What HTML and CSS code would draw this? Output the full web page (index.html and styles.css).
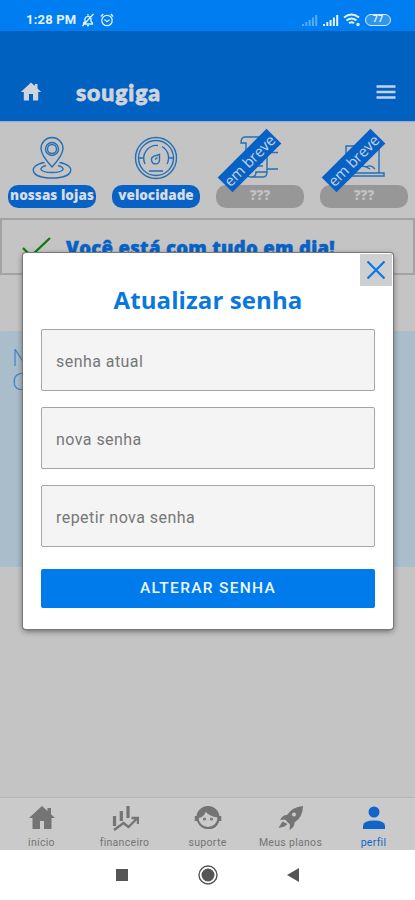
FILE: index.html
```html
<!DOCTYPE html>
<html lang="pt-BR">
<head>
<meta charset="utf-8">
<title>sougiga</title>
<link rel="stylesheet" href="styles.css">
</head>
<body>
<div class="status">
  <span class="time">1:28 PM</span>
  <svg class="bell" width="14" height="14" viewBox="0 0 14 14" fill="none" stroke="currentColor" stroke-width="1.3"><path d="M2.5 11V10L4 8.5V5.5a3.2 3.2 0 0 1 6 0V8.5L11.5 10V11zM6 12.6h2M7 1v1.5M12.5 1L1.5 13"/></svg>
  <svg class="alarm" width="14" height="14" viewBox="0 0 14 14" fill="none" stroke="currentColor" stroke-width="1.3"><circle cx="7" cy="7.5" r="5.2"/><path d="M4.5 6.5L7 8.7l2.5-2M.8 3.5L3.2 1M13.2 3.5L10.8 1"/></svg>
  <span class="spacer"></span>
  <svg class="signal dim" width="17" height="12" viewBox="0 0 17 12" fill="currentColor"><path d="M1 10h2v2H1zM4.300 8h2v4h-2zM7.600 6h2v6h-2zM10.900 3.500h2V12h-2zM14.200 1h2v11h-2z"/></svg>
  <svg class="signal" width="17" height="12" viewBox="0 0 17 12" fill="currentColor"><path d="M1 10h2v2H1zM4.300 8h2v4h-2zM7.600 6h2v6h-2zM10.900 3.500h2V12h-2zM14.200 1h2v11h-2z"/></svg>
  <svg class="wifi" width="18" height="14" viewBox="0 0 18 14" fill="none" stroke="currentColor" stroke-width="2"><path d="M1 4.500q7.500-6 15 0M3.500 7.500q5-4 10 0M6 10.300q2.500-2 5 0"/><circle cx="15" cy="11.500" r="1" stroke-width="1.500"/></svg>
  <span class="battery">77</span>
</div>
<header class="header">
  <svg width="22" height="20" viewBox="0 0 22 20" fill="currentColor"><path d="M11 .5L.8 10h3v8.500H9V12h4v6.500h5.200V10h3L17.500 6.500V2h-2.700v2z"/></svg>
  <h1 class="brand">sougiga</h1>
  <svg class="menu" width="20" height="16" viewBox="0 0 20 16" stroke="currentColor" stroke-width="2.300"><path d="M.5 2.500h19M.5 8h19M.5 13.500h19"/></svg>
</header>
<main class="content">
  <nav class="shortcuts">
    <div class="tile">
      <svg width="44" height="44" viewBox="0 0 44 44" class="line"><path d="M22 31Q11 19 11 12.500a11 11 0 0 1 22 0Q33 19 22 31z"/><circle cx="22" cy="13" r="6.500"/><circle cx="22" cy="13" r="4.500"/><path d="M14.500 26.500C-2 29-1 42 22 42s24-13 7.500-15.500M16 29.500c-8 2-7 7 6 7s14-5 6-7"/></svg>
      <span class="pill">nossas lojas</span>
    </div>
    <div class="tile">
      <svg width="44" height="44" viewBox="0 0 44 44" class="line"><circle cx="22" cy="22" r="20.500"/><circle cx="22" cy="22" r="17.500"/><path d="M11 28a13 13 0 0 1 13-18.500M28 10.500A13 13 0 0 1 33 28M4.500 22H9M35 22h4.500M15 35h14M25.500 18.500L20 20.200a4 4 0 1 0 5.500 4zM21 23.500l2.500-2"/></svg>
      <span class="pill">velocidade</span>
    </div>
    <div class="tile">
      <svg width="44" height="44" viewBox="0 0 44 44" class="line"><path d="M28 1H7Q3 1 3 7h5v29q0 5 5 5h12q4 0 4-5V8M13 41q5 0 5-5h11M28 16.500h12M29 33h11M12 22h13M12 26h13M12 30h13"/></svg>
      <span class="pill off">???</span><span class="ribbon">em breve</span>
    </div>
    <div class="tile">
      <svg width="44" height="44" viewBox="0 0 44 44" class="line"><path d="M4 37V10h8M32 10h5v27M1 37h41v3H1zM10 33q10-6 18 0M24 31q5-3 9 2"/></svg>
      <span class="pill off">???</span><span class="ribbon">em breve</span>
    </div>
  </nav>
  <section class="notice">
    <svg width="30" height="24" viewBox="0 0 30 24" fill="none" stroke="#087d0b" stroke-width="2.300"><path d="M1 12l8 8L28 2"/></svg>
    <span class="notice-text">Você está com tudo em dia!</span>
  </section>
  <section class="panel">N<br>C</section>
</main>
<nav class="tabs">
  <div class="tab">
    <svg width="28" height="26" viewBox="0 0 28 26" fill="currentColor"><path d="M14 1L1 13h3.500v11h7.500v-8h4v8h7.500V13H27l-4-3.700V3h-3.500v3z"/></svg><span>início</span>
  </div>
  <div class="tab">
    <svg width="28" height="26" viewBox="0 0 28 26" fill="none" stroke="currentColor" stroke-width="3.200"><path d="M3.500 11v10M10.300 6v10M17 1v12"/><path stroke-width="2.300" d="M3 25l9.500-7 5 4L26 13.500M20.500 13H27v6"/></svg><span>financeiro</span>
  </div>
  <div class="tab">
    <svg width="28" height="26" viewBox="0 0 28 26" fill="none" stroke="currentColor" stroke-width="2"><circle cx="14" cy="12.500" r="10.500"/><path fill="currentColor" d="M4 12C9 12 10.500 8 11.500 5q4 6 12.500 6.500C22-1 5 0 4 12z"/><path stroke-width="3.500" d="M2.500 11v5M25.500 11v5"/><path d="M24.500 15q-2 8-9 8"/><circle cx="10.500" cy="14" r=".6"/><circle cx="17.500" cy="14" r=".6"/></svg><span>suporte</span>
  </div>
  <div class="tab">
    <svg width="28" height="26" viewBox="0 0 28 26" fill="currentColor"><path fill-rule="evenodd" d="M26 1q-11 1-16 9-4-.5-7 5l5-.5 5 5-.5 5.500q5-3 5-7.500Q26 12 26 1zM17 7.500a2 2 0 1 1 0 4 2 2 0 0 1 0-4z"/><path d="M5.500 16.500L1.500 23l6-1.500 3-2.500z"/></svg><span>Meus planos</span>
  </div>
  <div class="tab active">
    <svg width="28" height="26" viewBox="0 0 28 26" fill="currentColor"><circle cx="14" cy="7" r="5.500"/><path d="M3 24v-3q0-5.500 11-5.500T25 21v3z"/></svg><span>perfil</span>
  </div>
</nav>
<footer class="system">
  <svg width="14" height="14" viewBox="0 0 14 14"><path d="M1 1h12v12H1z" fill="#555"/></svg>
  <svg width="20" height="20" viewBox="0 0 20 20" fill="none" stroke="#555" stroke-width="1.400"><circle cx="10" cy="10" r="9"/><circle cx="10" cy="10" r="5.800" fill="#555"/></svg>
  <svg width="14" height="14" viewBox="0 0 14 14"><path d="M13 0v14L1 7z" fill="#555"/></svg>
</footer>
<form class="modal">
  <button type="button" class="close" aria-label="Fechar"><svg width="20" height="20" viewBox="0 0 20 20" stroke="#0878e8" stroke-width="2.200"><path d="M1.500 1.500l17 17M18.500 1.500l-17 17"/></svg></button>
  <h2 class="title">Atualizar senha</h2>
  <div class="field">senha atual</div>
  <div class="field">nova senha</div>
  <div class="field">repetir nova senha</div>
  <button type="button" class="submit">ALTERAR SENHA</button>
</form>
</body>
</html>
```
FILE: styles.css
```css
* { box-sizing: border-box; }
body { margin: 0; width: 415px; height: 900px; overflow: hidden; display: flex; flex-direction: column; position: relative; font-family: Roboto, sans-serif; background: #c4c4c4; }
svg { display: block; flex: none; }
.status { height: 31px; flex: none; background: #007df0; color: #e2f2ff; display: flex; align-items: center; padding: 8px 24px 0 26px; }
.time { font-size: 13px; font-weight: 700; width: 50px; white-space: nowrap; letter-spacing: .2px; }
.bell { margin-left: 5px; }
.alarm { margin-left: 5px; }
.spacer { flex: 1; }
.signal { margin-right: 4px; }
.dim { opacity: .4; }
.wifi { margin-right: 4px; }
.battery { width: 26px; height: 12px; border: 1.5px solid #d6ecff; border-radius: 6px; font-size: 9px; line-height: 9px; font-weight: 700; text-align: center; background: #2f95f3; }
.header { height: 90px; flex: none; background: #0061c1; color: #d0d4dc; display: flex; align-items: center; padding: 32px 19px 0 20px; box-shadow: 0 1px 1px #9aacc9; z-index: 1; }
.brand { margin: 0 0 0 34px; font: 900 23px/28px Lato, sans-serif; -webkit-text-stroke: .8px currentColor; width: 88px; letter-spacing: .9px; }
.menu { margin-left: auto; color: #c2d2e8; }
.content { flex: 1; min-height: 0; }
.shortcuts { height: 97px; display: grid; grid-template-columns: repeat(4, 88px); column-gap: 16px; padding: 15px 0 0 8px; }
.tile { position: relative; display: flex; flex-direction: column; align-items: center; }
.line { fill: none; stroke: #246fb5; stroke-width: 1.4; }
.pill { margin-top: 5px; width: 88px; height: 23px; border-radius: 10px; background: #0862c5; color: #d5dce6; font: 800 13.5px/21px "Open Sans", sans-serif; text-align: center; white-space: nowrap; }
.tile:first-child .pill { letter-spacing: .05px; }
.off { background: #979797; color: #c3c3c3; }
.ribbon { position: absolute; left: -1px; top: 14px; width: 69px; height: 21px; background: #0862c5; color: #c3d3e7; font: 500 15px/20px "Open Sans", sans-serif; letter-spacing: -.1px; text-align: center; white-space: nowrap; transform: rotate(-45deg); }
.notice { height: 57px; border: 2px solid #a3a3a3; display: flex; align-items: center; padding: 3px 0 0 20px; }
.notice-text { margin-left: 14px; width: 270px; color: #0862c5; font: 800 18.5px/26px "Open Sans", sans-serif; -webkit-text-stroke: .5px currentColor; white-space: nowrap; letter-spacing: .32px; }
.panel { margin-top: 56px; height: 236px; background: #aabdca; color: #3b82c7; padding: 14px 12px; font: 300 23px/24px "Open Sans", sans-serif; }
.tabs { height: 53px; flex: none; border-top: 1px solid #b4b4b4; background: #cacaca; color: #707070; display: grid; grid-template-columns: repeat(5, 83px); }
.tab { display: flex; flex-direction: column; align-items: center; padding-top: 7px; font-size: 10.5px; line-height: 14px; letter-spacing: .3px; white-space: nowrap; color: #747474; }
.tab span { margin-top: 5px; }
.active { color: #1264c8; }
.system { height: 50px; flex: none; background: #fff; display: flex; justify-content: space-between; align-items: center; padding: 0 115px; }
.modal { position: absolute; left: 23px; top: 253px; width: 370px; height: 376px; padding: 31px 18px 0; background: #fff; border-radius: 3px; box-shadow: 0 0 0 1px #777, 0 2px 6px #0008; display: flex; flex-direction: column; }
.close { position: absolute; right: 1px; top: 1px; width: 32px; height: 32px; padding: 6px; border: 0; background: #cfcfcf; }
.title { margin: 0 0 13px; text-align: center; color: #0878df; font: 700 24px/32px "Open Sans", sans-serif; white-space: nowrap; letter-spacing: .1px; }
.field { height: 62px; flex: none; margin-bottom: 16px; border: 1.5px solid #a5a5a5; border-radius: 2px; background: #f4f4f4; color: #777; padding: 3px 14px 0; font-size: 16px; line-height: 58px; letter-spacing: .45px; }
.submit { height: 39px; margin-top: 6px; border: 0; border-radius: 2px; background: #007bec; color: #edf6ff; font: 500 15.5px/39px Roboto, sans-serif; letter-spacing: 1.3px; padding: 0; }
```
